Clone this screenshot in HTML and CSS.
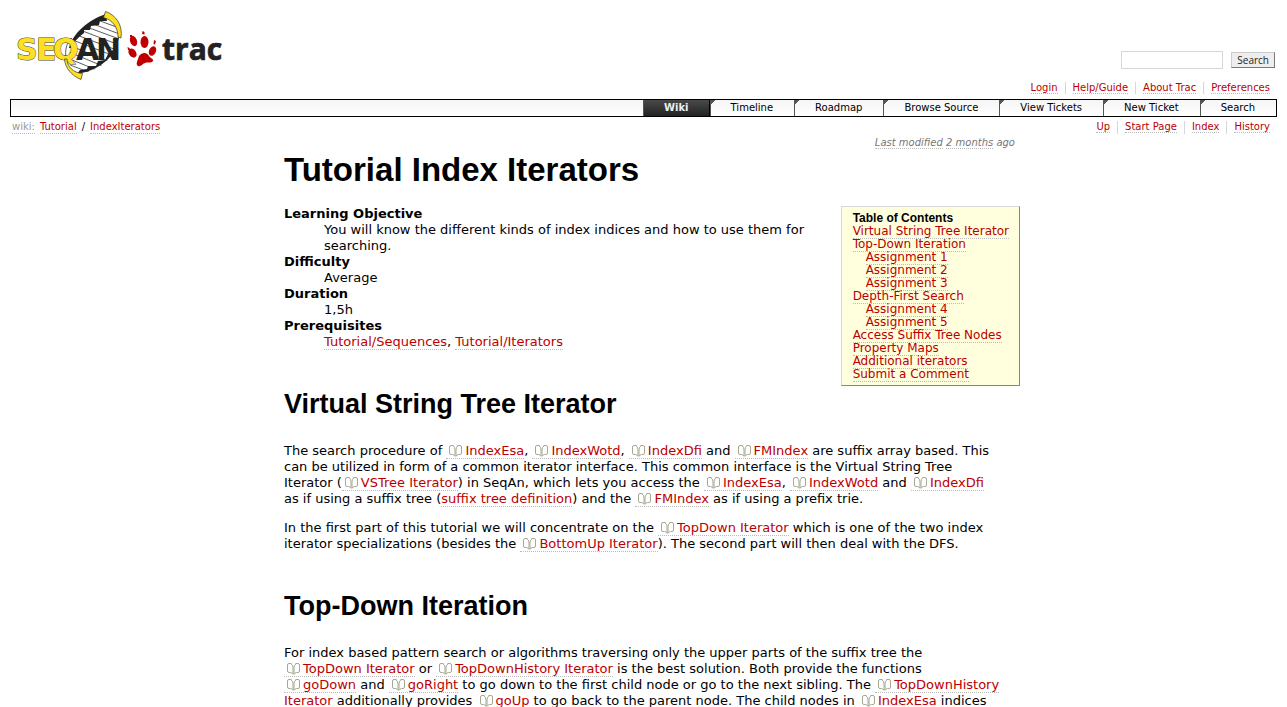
FILE: index.html
```html
<!DOCTYPE html>
<html lang="en">
<head>
<meta charset="utf-8">
<title>Tutorial Index Iterators</title>
<link rel="stylesheet" href="styles.css">
</head>
<body>
<svg class="defs" width="0" height="0" aria-hidden="true">
  <symbol id="book" viewBox="0 0 13 12">
    <g fill="none" stroke="#a6a893">
      <path d="M4.500 .5H2Q.5 .5 .5 2V8Q.5 9.500 2 9.500H3.500Q5 9.500 5.500 11"/>
      <path d="M8.500 .5H11Q12.500 .5 12.500 2V8Q12.500 9.500 11 9.500H9.500Q8 9.500 7.500 11"/>
      <path d="M4 1Q6 1.500 6 5V11.500M9 1Q7 1.500 7 5V11.500"/>
    </g>
  </symbol>
</svg>
<header class="header">
  <a class="logo" href="#" aria-label="SeqAn Trac">
    <svg width="216" height="74" viewBox="10 8 216 74" role="img">
      <defs>
        <clipPath id="strand"><path d="M106 17C88 22 74 33 70 49C67 64 72 73 80 74C101 71 116 56 119 36C119 26 113 19 106 17Z"/></clipPath>
      </defs>
      <g clip-path="url(#strand)" stroke="#333" stroke-width="0.8">
        <path d="M92 18L122 29M88 22L122 35M84 26L122 40M80 30L122 46M74 34L122 52M70 39L122 59M66 44L116 64M64 50L110 69M62 56L102 72M62 62L94 74" fill="none"/>
      </g>
      <path d="M106 14C88 20 73 33 69 48L71 48C75 40 80 36 84 33L84 30L90 30L91 26L99 25L100 21L107 21Z" fill="#222"/>
      <path d="M119 35C118 54 102 70 77 74L80 70L87 69L88 66L96 66L98 61L105 60L108 54L113 50Z" fill="#222"/>
      <path d="M105.500 11.500C116 15 123 25 121 38L118 37C118 28 113 20 103.500 17.500Z" fill="#fde021" stroke="#333" stroke-width="0.700"/>
      <path d="M72 38C66 43 65 50 66 58" fill="none" stroke="#333" stroke-width="0.800"/>
      <text class="logo-seq" x="16 36 53" y="60">SEQ</text>
      <path d="M67 59C67 66 73 73 82.500 73.500L81 79.500C72 76 65 68 64.500 59Z" fill="#fde021" stroke="#333" stroke-width="0.700"/>
      <text class="logo-an" x="76 96" y="60">AN</text>
      <g fill="#c00000">
        <ellipse cx="133.500" cy="41" rx="3.400" ry="5.300" transform="rotate(-20 133.500 41)"/>
        <ellipse cx="144.500" cy="42" rx="4" ry="6"/>
        <ellipse cx="152.500" cy="51" rx="3.400" ry="5" transform="rotate(25 152.500 51)"/>
        <ellipse cx="132.500" cy="53" rx="3.600" ry="5" transform="rotate(-35 132.500 53)"/>
        <path d="M130 35L132 35L132 37L130 37ZM142.500 31L144.500 32L144.500 34.500L142 34ZM154 40L156 41L155 44.500L153.500 44ZM127.500 47L129.500 48L130 50L128 50Z"/>
        <path d="M139 56C142 52 147 52 149 56C150 58 154 59 153 61C151 63.500 147 62 145 63C142 64 141 67 138 66C135 64 138 60 139 56Z"/>
      </g>
      <text class="logo-trac" x="162" y="60">trac</text>
    </svg>
  </a>
  <div class="tools">
    <form class="search" role="search">
      <input type="text" aria-label="Search text">
      <button type="button">Search</button>
    </form>
    <nav class="links" aria-label="Account">
      <span><a href="#">Login</a></span><span><a href="#">Help/Guide</a></span><span><a href="#">About Trac</a></span><span><a href="#">Preferences</a></span>
    </nav>
  </div>
</header>
<nav class="mainnav" aria-label="Main">
  <a class="active" href="#">Wiki</a><a href="#">Timeline</a><a href="#">Roadmap</a><a href="#">Browse Source</a><a href="#">View Tickets</a><a href="#">New Ticket</a><a href="#">Search</a>
</nav>
<div class="context">
  <div class="path"><a class="first" href="#">wiki:</a><a href="#">Tutorial</a><span>/</span><a href="#">IndexIterators</a></div>
  <nav class="links" aria-label="Page">
    <span><a href="#">Up</a></span><span><a href="#">Start Page</a></span><span><a href="#">Index</a></span><span><a href="#">History</a></span>
  </nav>
</div>
<main class="wiki">
  <p class="modified"><a href="#">Last modified</a> <a href="#">2 months</a> ago</p>
  <h1>Tutorial Index Iterators</h1>
  <nav class="toc" aria-labelledby="toc-title">
    <h4 id="toc-title">Table of Contents</h4>
    <ol>
      <li><a href="#vstree">Virtual String Tree Iterator</a></li>
      <li><a href="#topdown">Top-Down Iteration</a>
        <ol>
          <li><a href="#">Assignment 1</a></li>
          <li><a href="#">Assignment 2</a></li>
          <li><a href="#">Assignment 3</a></li>
        </ol>
      </li>
      <li><a href="#">Depth-First Search</a>
        <ol>
          <li><a href="#">Assignment 4</a></li>
          <li><a href="#">Assignment 5</a></li>
        </ol>
      </li>
      <li><a href="#">Access Suffix Tree Nodes</a></li>
      <li><a href="#">Property Maps</a></li>
      <li><a href="#">Additional iterators</a></li>
      <li><a href="#">Submit a Comment</a></li>
    </ol>
  </nav>
  <dl>
    <dt>Learning Objective</dt>
    <dd>You will know the different kinds of index indices and how to use them for searching.</dd>
    <dt>Difficulty</dt>
    <dd>Average</dd>
    <dt>Duration</dt>
    <dd>1,5h</dd>
    <dt>Prerequisites</dt>
    <dd><a href="#">Tutorial/Sequences</a>, <a href="#">Tutorial/Iterators</a></dd>
  </dl>
  <h2 id="vstree">Virtual String Tree Iterator</h2>
  <p>The search procedure of <a href="#"><svg class="book"><use href="#book"/></svg>IndexEsa</a>, <a href="#"><svg class="book"><use href="#book"/></svg>IndexWotd</a>, <a href="#"><svg class="book"><use href="#book"/></svg>IndexDfi</a> and <a href="#"><svg class="book"><use href="#book"/></svg>FMIndex</a> are suffix array based. This<br>
    can be utilized in form of a common iterator interface. This common interface is the Virtual String Tree<br>
    Iterator (<a href="#"><svg class="book"><use href="#book"/></svg>VSTree Iterator</a>) in SeqAn, which lets you access the <a href="#"><svg class="book"><use href="#book"/></svg>IndexEsa</a>, <a href="#"><svg class="book"><use href="#book"/></svg>IndexWotd</a> and <a href="#"><svg class="book"><use href="#book"/></svg>IndexDfi</a><br>
    as if using a suffix tree (<a href="#">suffix tree definition</a>) and the <a href="#"><svg class="book"><use href="#book"/></svg>FMIndex</a> as if using a prefix trie.</p>
  <p>In the first part of this tutorial we will concentrate on the <a href="#"><svg class="book"><use href="#book"/></svg>TopDown Iterator</a> which is one of the two index<br>
    iterator specializations (besides the <a href="#"><svg class="book"><use href="#book"/></svg>BottomUp Iterator</a>). The second part will then deal with the DFS.</p>
  <h2 id="topdown">Top-Down Iteration</h2>
  <p>For index based pattern search or algorithms traversing only the upper parts of the suffix tree the<br>
    <a href="#"><svg class="book"><use href="#book"/></svg>TopDown Iterator</a> or <a href="#"><svg class="book"><use href="#book"/></svg>TopDownHistory Iterator</a> is the best solution. Both provide the functions<br>
    <a href="#"><svg class="book"><use href="#book"/></svg>goDown</a> and <a href="#"><svg class="book"><use href="#book"/></svg>goRight</a> to go down to the first child node or go to the next sibling. The <a href="#"><svg class="book"><use href="#book"/></svg>TopDownHistory<br>
    Iterator</a> additionally provides <a href="#"><svg class="book"><use href="#book"/></svg>goUp</a> to go back to the parent node. The child nodes in <a href="#"><svg class="book"><use href="#book"/></svg>IndexEsa</a> indices</p>
</main>
</body>
</html>
```
FILE: styles.css
```css
html { overflow: hidden; }
body {
  margin: 0;
  padding: 8px 10px 0;
  background: #fff;
  color: #000;
  font: 13px/16px Verdana, "DejaVu Sans", sans-serif;
}
.defs { position: absolute; }
a { color: #b00; text-decoration: none; border-bottom: 1px dotted #bbb; }

.header { display: flex; justify-content: space-between; align-items: flex-end; }
.logo { border: 0; align-self: flex-start; }
.logo svg { display: block; }
.logo text { font-family: "DejaVu Sans", sans-serif; font-weight: 700; font-size: 30px; }
.logo-seq { fill: #fde021; stroke: #444; stroke-width: 1px; paint-order: stroke; }
.logo-an { fill: #222; }
.logo .logo-trac { fill: #222; stroke: #222; stroke-width: 0.7px; font-family: "Open Sans", "Noto Sans", sans-serif; font-size: 30px; }
.tools { display: flex; flex-direction: column; align-items: flex-end; gap: 13px; padding: 43px 0 5px; }
.search { display: flex; align-items: center; gap: 8px; padding-right: 2px; margin: 0; }
.search input { box-sizing: border-box; width: 102px; height: 18px; border: 1px solid #d7d7d7; padding: 0 4px; font-size: 11px; }
.search button {
  box-sizing: border-box;
  height: 16px;
  padding: 0 5px;
  border: 1px solid #ccc;
  border-right-color: #777;
  border-bottom-color: #777;
  background: #eee;
  color: #222;
  font: 10px/13px "Open Sans", sans-serif;
}
.links { display: flex; font-size: 10px; line-height: 12px; }
.links span { padding: 0 7px; border-right: 1px solid #d7d7d7; }
.links span:last-child { border-right: 0; }

.mainnav {
  display: flex;
  justify-content: flex-end;
  border: 1px solid #000;
  background: linear-gradient(#f5f5f5, #fff);
  font-size: 10px;
  line-height: 16px;
}
.mainnav a {
  padding: 0 21px 0 20px;
  border: 0;
  border-left: 1px solid #555;
  color: #000;
  background: linear-gradient(135deg, #555 3px, transparent 3px) no-repeat;
}
.mainnav .active { padding: 0 20px; background: linear-gradient(#484a48, #222); color: #eee; font-weight: 700; border-right: 1px solid #000; }

.context { display: flex; justify-content: space-between; padding: 4px 0 0 2px; font-size: 10px; line-height: 12px; }
.path { display: flex; align-items: flex-start; gap: 5px; }
.context .first { color: #999; }

.wiki { box-sizing: border-box; max-width: 753px; margin: 0 auto; padding-left: 17px; }
.modified { margin: 3px 5px 0 0; text-align: right; font-size: 10px; line-height: 12px; font-style: italic; color: #777; }
.modified a { color: #777; }
h1, h2, h4 { font-family: Arial, "Liberation Sans", sans-serif; font-weight: 700; }
h1 { margin: 3px 0 18px; font-size: 33px; line-height: 36px; }
h2 { margin: 37px 0 22px; font-size: 27px; line-height: 34px; }
.wiki h2 + p { margin-top: 0; }
.wiki p:not(.modified) { margin-bottom: 13px; }
dl { margin: 0; }
dt { font-weight: 700; }
dd { margin: 0 0 0 40px; }

.toc {
  float: right;
  margin-left: 16px;
  padding: 4px 10px 4px 11px;
  border: 1px solid #d7d7d7;
  border-right-color: #887;
  border-bottom-color: #887;
  background: #ffd;
  font-size: 12px;
  line-height: 13px;
}
.toc h4 { margin: 0; font-size: 12px; line-height: 14px; }
.toc ol { list-style: none; margin: 0; padding: 0; }
.toc ol ol { padding-left: 13px; }

.book { width: 13px; height: 12px; margin: 0 3px; vertical-align: -2px; }
```
